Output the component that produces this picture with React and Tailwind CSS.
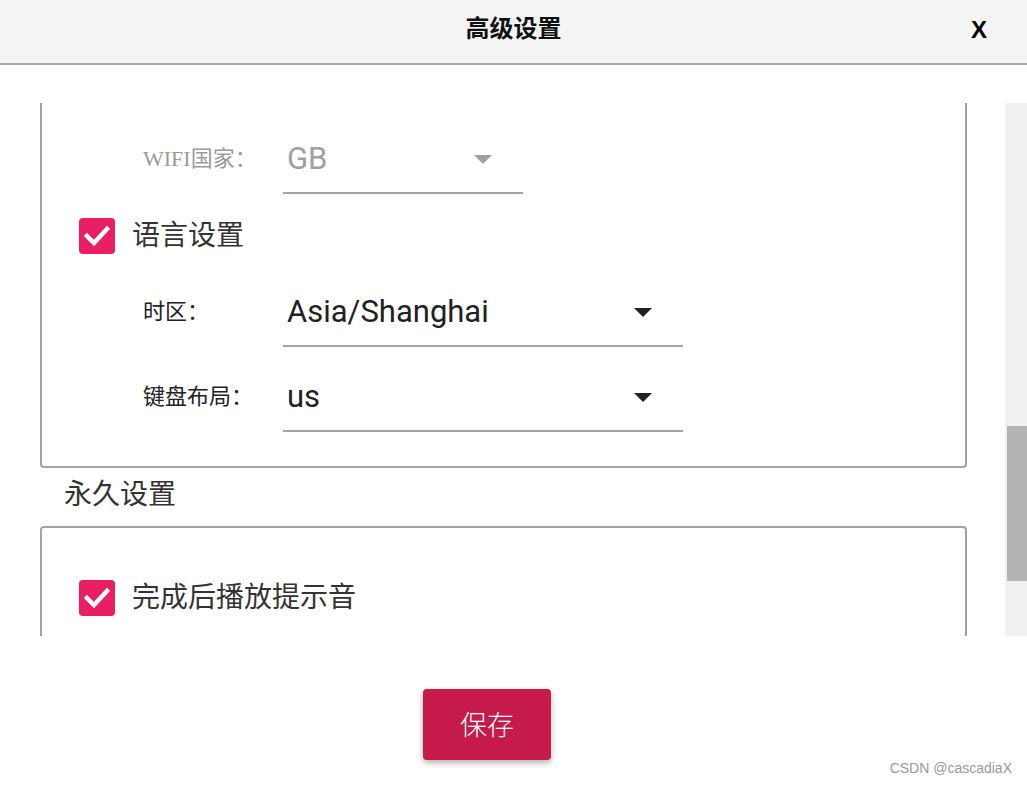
import React from 'react';

const serif = { fontFamily: '"Liberation Serif", "Noto Sans CJK SC", serif' };
const roboto = { fontFamily: 'Roboto, "Noto Sans", sans-serif' };

const Arrow = ({ color }) => (
  <svg width="18" height="9" viewBox="0 0 18 9" className="shrink-0">
    <polygon points="0,0 18,0 9,9" fill={color} />
  </svg>
);

const Select = ({ value, width, disabled }) => (
  <div
    className={`flex items-start justify-between pt-2 pb-4 pl-[4px] pr-[31px] border-b-2 border-[#a3a3a3] ${width}`}
  >
    <span
      style={roboto}
      className={`text-[31px] leading-[34px] ${disabled ? 'text-[#a0a0a0]' : 'text-[#212121]'}`}
    >
      {value}
    </span>
    <div className="pt-[13px]">
      <Arrow color={disabled ? '#a0a0a0' : '#212121'} />
    </div>
  </div>
);

const Row = ({ label, value, width, disabled }) => (
  <div className="flex items-start pl-[101px]">
    <div
      style={serif}
      className={`w-[140px] pt-2 text-[22px] leading-[34px] ${disabled ? 'text-[#9a9a9a]' : 'text-[#222]'}`}
    >
      {label}
    </div>
    <Select value={value} width={width} disabled={disabled} />
  </div>
);

const Checkbox = ({ label }) => (
  <div className="flex items-center gap-[17px] pl-[37px]">
    <div className="w-9 h-9 rounded-[4px] bg-[#ea1f63] flex items-center justify-center">
      <svg width="26" height="22" viewBox="0 0 26 22">
        <polyline
          points="3,11 10,18 23,4"
          fill="none"
          stroke="#fff"
          strokeWidth="4.5"
          strokeLinecap="square"
        />
      </svg>
    </div>
    <span style={serif} className="text-[28px] leading-[36px] text-[#333]">
      {label}
    </span>
  </div>
);

export default function App() {
  return (
    <div className="relative w-[1027px] h-[785px] bg-white overflow-hidden">
      <div className="h-[65px] bg-[#f4f4f4] border-b-2 border-[#a9a9a9] flex items-center relative">
        <div
          className="flex-1 text-center text-[24px] font-bold text-[#111] pb-[6px]"
          style={{ fontFamily: '"Liberation Sans", "Noto Sans CJK SC", sans-serif' }}
        >
          高级设置
        </div>
        <div
          className="absolute right-[40px] top-[12px] text-[24px] font-bold text-black"
          style={{ fontFamily: '"Liberation Sans", sans-serif' }}
        >
          X
        </div>
      </div>

      <div className="mt-[38px] h-[533px] flex overflow-hidden">
        <div className="w-[1005px] pl-[40px]">
          <div className="w-[927px] border-x-2 border-b-2 border-[#a3a3a3] rounded-b-[4px] pt-[31px] pb-[34px]">
            <Row label="WIFI国家：" value="GB" width="w-[240px]" disabled />
            <div className="mt-6">
              <Checkbox label="语言设置" />
            </div>
            <div className="mt-[33px]">
              <Row label="时区：" value="Asia/Shanghai" width="w-[400px]" />
            </div>
            <div className="mt-[25px]">
              <Row label="键盘布局：" value="us" width="w-[400px]" />
            </div>
          </div>
          <div style={serif} className="pl-[24px] pt-[10px] pb-[14px] text-[28px] leading-[34px] text-[#333]">
            永久设置
          </div>
          <div className="w-[927px] h-[200px] border-x-2 border-t-2 border-[#a3a3a3] rounded-t-[4px] pt-[52px]">
            <Checkbox label="完成后播放提示音" />
          </div>
        </div>
        <div className="w-[22px] bg-[#f0f0f0] flex flex-col items-end">
          <div className="h-[323px]" />
          <div className="w-[20px] h-[155px] bg-[#b4b4b4]" />
        </div>
      </div>

      <div className="mt-[53px] flex pl-[423px]">
        <button
          type="button"
          className="w-[128px] h-[71px] rounded-[4px] bg-[#c51a4a] text-white text-[27px] shadow-[0_3px_6px_rgba(0,0,0,0.3)]"
          style={{ fontFamily: '"Noto Sans CJK SC", sans-serif', fontWeight: 300 }}
        >
          保存
        </button>
      </div>

      <div
        className="absolute right-[15px] bottom-[6px] text-[14px] text-[#999]"
        style={{ fontFamily: '"Liberation Sans", sans-serif' }}
      >
        CSDN @cascadiaX
      </div>
    </div>
  );
}
